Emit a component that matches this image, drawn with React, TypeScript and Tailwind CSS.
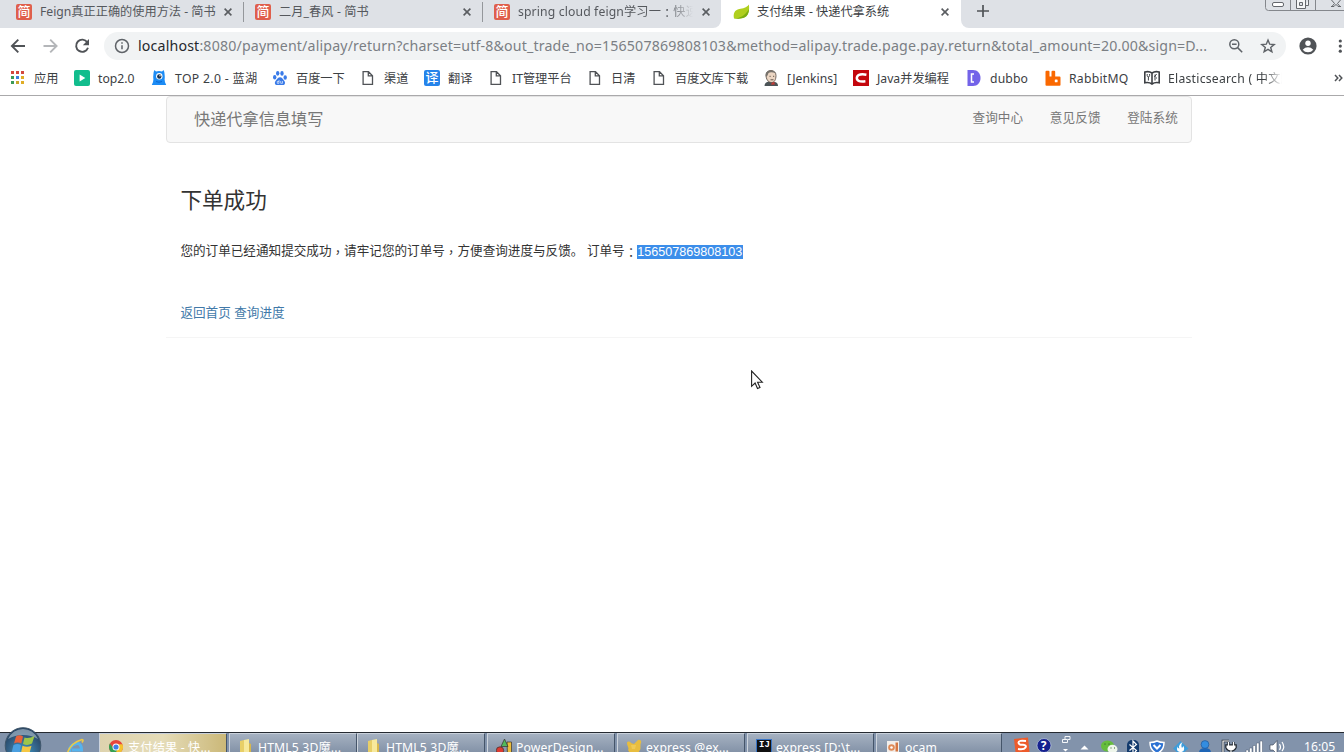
import type { ReactNode } from 'react';

function JianIcon() {
  return (
    <span className="flex h-4 w-4 shrink-0 items-center justify-center rounded-[2px] bg-[#df5f4c] text-[13px] leading-none font-medium text-white">
      <span className="-mt-px">简</span>
    </span>
  );
}

function CloseIcon() {
  return (
    <svg width="8" height="8" viewBox="0 0 8 8" className="-mt-px shrink-0" stroke="#5a5d61" strokeWidth="1.6">
      <path d="M0.6 0.6 7.4 7.4M7.4 0.6 0.6 7.4" />
    </svg>
  );
}

function PageIcon() {
  return (
    <svg width="16" height="16" viewBox="0 0 16 16" fill="none" stroke="#505357" strokeWidth="1.3">
      <path d="M3.1 1.7h5.400l4 4v8.600H3.1zM8.300 1.900v4h4" />
    </svg>
  );
}

function LeafIcon() {
  return (
    <svg width="17" height="16" viewBox="0 0 17 16" className="shrink-0">
      <path d="M15.8.6c.9 5 .1 9.600-3.500 12.200-3.300 2.300-8 2-11.300 1.600C0 9.800 1.600 5.900 6.300 5.100 10 4.500 13.500 4 15.800.6z" fill="#b0cf1e" />
      <path d="M1 14.300c4.500.2 10.500-1.500 15-9.300 0 4-1.500 7.300-4.500 8.600-3.300 1.400-7 1.200-10.500.7z" fill="#7cae12" />
    </svg>
  );
}

// full-width punctuation centred in its em box
function Mark({ children }: { children: string }) {
  return <span className="relative top-[2px] font-['Noto_Sans_CJK_TC',sans-serif] leading-none">{children}</span>;
}

const appColors = ['#d3483f', '#d3483f', '#d3483f', '#3a9a57', '#3c80e0', '#e0ad25', '#3a9a57', '#c8a72c', '#e0ad25'];

const bookmarks: { label: string; width: string; icon: ReactNode }[] = [
  {
    label: '应用',
    width: 'w-[24px]',
    icon: (
      <svg width="16" height="16" viewBox="0 0 16 16">
        {appColors.map((c, i) => (
          <rect key={i} x={1 + (i % 3) * 5} y={1 + Math.floor(i / 3) * 5} width="3" height="3" fill={c} />
        ))}
      </svg>
    ),
  },
  {
    label: 'top2.0',
    width: 'w-[37px]',
    icon: (
      <svg width="16" height="16" viewBox="0 0 16 16">
        <rect width="16" height="16" rx="2" fill="#12bd8d" />
        <path d="M5.600 4.600 11.300 8l-5.700 3.400z" fill="#fff" />
      </svg>
    ),
  },
  {
    label: 'TOP 2.0 - 蓝湖',
    width: 'w-[81px] tracking-[0.35px]',
    icon: (
      <svg width="16" height="16" viewBox="0 0 16 16">
        <path d="M3.500 0 5 1.500Q8 .3 11 1.500L12.500 0q1.200 2 1.100 4.500.4 2.500 0 5-.1 2 1.600 5.500H.8q1.700-3.500 1.600-5.500-.4-2.500 0-5Q2.300 2 3.500 0z" fill="#1c8cf5" />
        <circle cx="8.300" cy="6.200" r="3.200" fill="#fff" />
        <circle cx="8.300" cy="6.500" r="2.200" fill="#16304f" />
        <circle cx="9" cy="5.700" r=".7" fill="#fff" />
        <path d="M5 11.500q3 1.500 6 0" stroke="#0b66cf" fill="none" />
      </svg>
    ),
  },
  {
    label: '百度一下',
    width: 'w-[48px]',
    icon: (
      <svg width="16" height="16" viewBox="0 0 16 16" fill="#3a7be8">
        <ellipse cx="5.700" cy="3.300" rx="1.700" ry="2.400" />
        <ellipse cx="10" cy="3.400" rx="1.700" ry="2.300" />
        <ellipse cx="2.700" cy="7.300" rx="1.700" ry="2.200" />
        <ellipse cx="13.200" cy="7.500" rx="1.700" ry="2.200" />
        <path d="M8 7.300c2 0 2.600 1.800 4 3.100 1.700 1.600 1.300 4.600-1.200 4.700-1 0-1.800-.2-2.800-.2s-1.800.2-2.800.2c-2.600-.1-3-3.100-1.300-4.700C5.400 9.100 6 7.300 8 7.300z" />
        <path d="M7 10v3.300H5.300v-1.800H7M8.700 11v2.300h1.800V11" stroke="#fff" strokeWidth=".6" fill="none" />
      </svg>
    ),
  },
  { label: '渠道', width: 'w-[24px]', icon: <PageIcon /> },
  {
    label: '翻译',
    width: 'w-[24px]',
    icon: (
      <span className="flex h-4 w-4 items-center justify-center rounded-[2px] bg-[#2583ea] text-[13px] leading-none font-medium text-white">
        <span className="-mt-[2px]">译</span>
      </span>
    ),
  },
  { label: 'IT管理平台', width: 'w-[59px]', icon: <PageIcon /> },
  { label: '日清', width: 'w-[24px]', icon: <PageIcon /> },
  { label: '百度文库下载', width: 'w-[72px]', icon: <PageIcon /> },
  {
    label: '[Jenkins]',
    width: 'w-[50px] tracking-[0.05px]',
    icon: (
      <svg width="16" height="16" viewBox="0 0 16 16">
        <path d="M1.500 16c0-2.500 1.500-4 4.500-4.500l5 .3c2.600.5 4 1.700 4 4.200z" fill="#4b5457" />
        <path d="M3 5c0-3 2.200-4.500 5-4.500S13 2.300 13 5.500c0 4-1.600 7-4.300 7C5 12.500 3 9 3 5z" fill="#ecd6c3" stroke="#54483f" strokeWidth=".8" />
        <path d="M3 7C2 2.600 4.500.3 8 .5c2.200.1 4 1 4.800 3C10 2 7 1.800 5.500 3 4.800 4 5 6 3 7z" fill="#77736d" />
        <path d="M6.500 6.300h1.200M10 6.300h1.200M7.500 9.800h3" stroke="#54483f" strokeWidth=".9" />
        <path d="m8.500 13 3-1.300v3.600l-1.300-1-1.700 1z" fill="#c93a35" />
      </svg>
    ),
  },
  {
    label: 'Java并发编程',
    width: 'w-[73px]',
    icon: (
      <svg width="16" height="16" viewBox="0 0 16 16">
        <rect width="16" height="16" fill="#c4060d" />
        <path d="M13.400 4.700Q5 3.300 3.900 7.300 3 12.300 12.400 11.200" stroke="#fff" strokeWidth="2.500" fill="none" />
      </svg>
    ),
  },
  {
    label: 'dubbo',
    width: 'w-[39px] tracking-[0.150px]',
    icon: (
      <svg width="16" height="16" viewBox="0 0 16 16">
        <path d="M1.500 0H7c4.500 0 7.500 3.300 7.500 8s-3 8-7.500 8H1.500z" fill="#7363e8" />
        <path d="M8 4H5.500v8H8" stroke="#fff" strokeWidth="1.500" fill="none" />
      </svg>
    ),
  },
  {
    label: 'RabbitMQ',
    width: 'w-[59px] tracking-[0.25px]',
    icon: (
      <svg width="16" height="16" viewBox="0 0 16 16">
        <path d="M.500 1.800Q.500.800 1.500.800h2q1 0 1 1v4.700h2V1.800q0-1 1-1h1.700q1 0 1 1v4.700h4.300q1 0 1 1V15q0 .8-1 .8h-13q-1 0-1-.8z" fill="#fa6800" />
        <rect x="9.800" y="9.500" width="2.800" height="2.800" rx=".6" fill="#fff" />
      </svg>
    ),
  },
  {
    label: 'Elasticsearch ( 中文版 )',
    width: 'w-[114px] tracking-[0.25px] [mask-image:linear-gradient(to_right,black_96px,transparent)]',
    icon: (
      <svg width="16" height="16" viewBox="0 0 16 16" fill="none" stroke="#3d4044" strokeWidth="1.600">
        <path d="M.800 2Q5 .800 8 3q3-2.200 7.200-1v10.800Q11 11.800 8 14q-3-2.200-7.200-1.200zM8 3v10.500" />
        <path d="M3.200 4v1.500q0 1.300 1.200 1.300T5.600 5.500V4M4.400 7v3.500M10.400 7l2.200-3M11 10.500V4.500M12.500 7.500v1" strokeWidth="1" />
      </svg>
    ),
  },
];

function TabStrip() {
  return (
    <div className="flex h-7 shrink-0 bg-white text-[12.200px] text-[#55585d]">
      <div className="flex h-7 w-[721px] rounded-br-[8px] bg-[#dee1e6]">
        <div className="flex h-6 w-[243px] items-center pl-4">
          <JianIcon />
          <span className="ml-2 w-[184px] whitespace-nowrap">Feign真正正确的使用方法 - 简书</span>
          <CloseIcon />
        </div>
        <div className="flex h-6 w-[239px] items-center">
          <div className="h-5 w-px bg-[#94979b]" />
          <span className="ml-[11px] flex"><JianIcon /></span>
          <span className="ml-2 w-[184px] tracking-[0.100px] whitespace-nowrap">二月_春风 - 简书</span>
          <CloseIcon />
        </div>
        <div className="flex h-6 w-[239px] items-center">
          <div className="h-5 w-px bg-[#94979b]" />
          <span className="ml-[11px] flex"><JianIcon /></span>
          <span className="mr-[9px] ml-2 w-[175px] overflow-hidden [mask-image:linear-gradient(to_right,black_150px,transparent)] tracking-[0.140px] whitespace-nowrap">
            spring cloud feign学习一<Mark>：</Mark>快速
          </span>
          <CloseIcon />
        </div>
      </div>
      <div className="flex h-6 w-[240px] items-center pl-3 text-[#3c4043]">
        <LeafIcon />
        <span className="ml-[7px] w-[184px] whitespace-nowrap">支付结果 - 快递代拿系统</span>
        <CloseIcon />
      </div>
      <div className="flex flex-1 justify-between rounded-bl-[8px] bg-[#dee1e6]">
        <svg width="12" height="12" viewBox="0 0 12 12" className="mt-[5px] ml-4" stroke="#505357" strokeWidth="1.700">
          <path d="M6 0v12M0 6h12" />
        </svg>
        <svg width="80" height="12" viewBox="0 0 80 12" fill="none" stroke="#84878c">
          <path d="M1.500 0v7.500q0 3 3 3H80M26.500 0v10M51.500 0v10" />
          <rect x="8.500" y="2.500" width="11" height="4" rx="1.500" fill="#fff" stroke="#65686d" />
          <path d="M41.500 5.500h3V0M32.500 0v8.500h9V0M35.500 2.500h3v3h-3z" fill="#f5f6f7" stroke="#65686d" />
          <path d="m67.500 7 3-3.500L67.500 0M76.500 7l-3-3.500 3-3.500M67 6.500h3l2-2.200 2 2.200h3" stroke="#65686d" />
        </svg>
      </div>
    </div>
  );
}

function Toolbar() {
  return (
    <div className="flex h-9 shrink-0 items-center">
      <svg width="104" height="36" viewBox="0 0 104 36" fill="none" strokeWidth="1.900" className="shrink-0">
        <path d="M25 18H12M18.300 11.600 11.900 18l6.400 6.400" stroke="#505357" />
        <path d="M43.500 18h13M50.200 11.600l6.400 6.400-6.400 6.400" stroke="#b4b6b9" />
        <path d="M87.300 14.300A6.100 6.100 0 1 0 88 19.800" stroke="#505357" />
        <path d="M89 11v6.200h-6.200z" fill="#505357" />
      </svg>
      <div className="flex h-7 w-[1182px] shrink-0 items-center rounded-full bg-[#f1f3f4] pl-[10px]">
        <svg width="16" height="16" viewBox="0 0 16 16" fill="none" stroke="#5f6368" strokeWidth="1.500" className="shrink-0">
          <circle cx="8" cy="8" r="6.500" />
          <path d="M8 7.200v4M8 4.300v1.500" />
        </svg>
        <span className="ml-2 w-[1090px] text-[14.200px] tracking-[0.160px] whitespace-nowrap text-[#7b7f84]">
          <span className="text-[#25282c]">localhost</span>
          :8080/payment/alipay/return?charset=utf-8&amp;out_trade_no=156507869808103&amp;method=alipay.trade.page.pay.return&amp;total_amount=20.00&amp;sign=D...
        </span>
        <svg width="16" height="16" viewBox="0 0 16 16" fill="none" stroke="#5f6368" strokeWidth="1.500" className="shrink-0">
          <circle cx="6.300" cy="6.300" r="4.500" />
          <path d="m9.600 9.600 4.600 4.600M4 6.300h4.600" />
        </svg>
        <svg width="16" height="16" viewBox="0 0 16 16" fill="none" stroke="#5f6368" strokeWidth="1.400" className="ml-4 shrink-0">
          <path d="m8 2 1.700 4.200 4.500.3-3.500 2.900 1.200 4.400L8 11.300l-3.900 2.500 1.200-4.400-3.500-2.900 4.500-.3z" />
        </svg>
      </div>
      <svg width="18" height="18" viewBox="0 0 18 18" className="ml-[13px] shrink-0">
        <circle cx="9" cy="9" r="8.600" fill="#505357" />
        <circle cx="9" cy="6.200" r="2.700" fill="#fff" />
        <path d="M3.700 12.700Q6 10.300 9 10.300t5.300 2.400Q12.300 15.300 9 15.300t-5.300-2.600z" fill="#fff" />
      </svg>
      <svg width="6" height="16" viewBox="0 0 6 16" fill="#505357" className="ml-[20px] shrink-0">
        <circle cx="3.300" cy="3" r="1.600" />
        <circle cx="3.300" cy="8.100" r="1.600" />
        <circle cx="3.300" cy="13.200" r="1.600" />
      </svg>
    </div>
  );
}

function BookmarkBar() {
  return (
    <div className="flex h-8 shrink-0 items-start justify-between border-b border-[#aaa9ab] pt-[6px]">
      <div className="flex gap-4 pl-[10px]">
        {bookmarks.map((b, i) => (
          <div key={i} className="flex h-4 items-center gap-2">
            <span className="flex h-4 w-4 shrink-0">{b.icon}</span>
            <span className={`${b.width} mt-[2px] shrink-0 text-[12.200px] leading-[18px] whitespace-nowrap text-[#3c4043]`}>
              {b.label}
            </span>
          </div>
        ))}
      </div>
      <svg width="11" height="16" viewBox="0 0 11 16" fill="none" stroke="#505357" strokeWidth="1.500">
        <path d="m2 5 2.800 3L2 11M6 5l2.800 3L6 11" />
      </svg>
    </div>
  );
}

function PageContent() {
  return (
    <main className="ml-[166px] w-[1026px] flex-1 font-['Liberation_Sans','Noto_Sans_CJK_SC',sans-serif] text-[12.600px] text-[#333]">
      <nav className="flex h-[47px] items-center justify-between rounded-[4px] border border-[#e3e3e3] bg-[#f8f8f8] pr-[13px] pl-[27px] text-[#777]">
        <a className="text-[16.200px]">快递代拿信息填写</a>
        <div className="flex gap-[26.500px] pb-[2px] tracking-[0.120px]">
          <a>查询中心</a>
          <a>意见反馈</a>
          <a>登陆系统</a>
        </div>
      </nav>
      <section className="h-[195px] border-b border-[#f5f5f5] pt-[43px] pl-[14.400px]">
        <h3 className="text-[21.600px] leading-[30px]">下单成功</h3>
        <p className="mt-[26px] leading-[18px] whitespace-nowrap">
          您的订单已经通知提交成功<Mark>，</Mark>请牢记您的订单号<Mark>，</Mark>方便查询进度与反馈。 订单号<Mark>：</Mark>
          <span className="inline-block h-[14px] w-[106px] bg-[#3c8eea] align-middle leading-[14px] text-white">156507869808103</span>
        </p>
        <p className="mt-[44px] leading-[18px] text-[#4179a9]">
          <a>返回首页</a> <a>查询进度</a>
        </p>
      </section>
      <svg width="14" height="20" viewBox="0 0 14 20" className="mt-[32px] ml-[585px]">
        <path d="M.6 1v15.300l3.500-3.300 2.400 5.500 2.500-1.100-2.400-5.200h4.700z" fill="#fff" stroke="#222" strokeWidth="1.100" />
      </svg>
    </main>
  );
}

function FolderIcon() {
  return (
    <svg width="16" height="16" viewBox="0 0 16 16">
      <path d="M2 2 6 1v15H2z" fill="#e8cf67" />
      <path d="m6 1 5-1v16H6z" fill="#f7e99c" />
      <path d="m11 4 2 1v11h-2z" fill="#d8b84c" />
    </svg>
  );
}

const tasks: { label: string; width: string; icon: ReactNode }[] = [
  {
    label: '支付结果 - 快...',
    width: 'w-[128px] mr-[2px] bg-linear-to-r from-[#ded3ae] via-[#e5dcb8] to-[#cbb878]',
    icon: (
      <svg width="16" height="16" viewBox="0 0 16 16">
        <circle cx="8" cy="8" r="7" fill="#e7463a" />
        <path d="M1.900 4.600A7 7 0 0 0 7 15l3.300-5.500L5.300 9z" fill="#35a153" />
        <path d="M14.400 5.200A7 7 0 0 1 7 15l4-7-3-2.800z" fill="#f4c32f" />
        <circle cx="8" cy="8" r="3.500" fill="#fff" />
        <circle cx="8" cy="8" r="2.600" fill="#3f7fe5" />
      </svg>
    ),
  },
  { label: 'HTML5 3D魔...', width: 'w-[128px] bg-linear-to-b from-[#a5b1c1] to-[#8291a6]', icon: <FolderIcon /> },
  { label: 'HTML5 3D魔...', width: 'w-[128px] mr-[2px] bg-linear-to-b from-[#a5b1c1] to-[#8291a6]', icon: <FolderIcon /> },
  {
    label: 'PowerDesign...',
    width: 'w-[128px] mr-[2px] bg-linear-to-b from-[#a5b1c1] to-[#8291a6]',
    icon: (
      <svg width="16" height="16" viewBox="0 0 16 16" stroke="#38302d" strokeWidth=".7">
        <path d="M11 3h4.500v13h-4z" fill="#ecbe3c" />
        <path d="m8.500 0 3.500 7.500H5z" fill="#51b95b" />
        <circle cx="4" cy="11.500" r="3.700" fill="#df3a31" />
      </svg>
    ),
  },
  {
    label: 'express @ex...',
    width: 'w-[128px] mr-[2px] bg-linear-to-b from-[#a5b1c1] to-[#8291a6]',
    icon: (
      <svg width="16" height="16" viewBox="0 0 16 16">
        <path d="M1 4c0-2 3-2 4 0l3 1L12 1c3-1 4 2 2.500 4v5L11 16H5L2 11C3.500 9 1 7 1 4z" fill="#e8bd3e" />
        <path d="M5 6h5l-1 4H6z" fill="#efca55" />
      </svg>
    ),
  },
  {
    label: 'express [D:\\t...',
    width: 'w-[127px] mr-[2px] bg-linear-to-b from-[#a5b1c1] to-[#8291a6]',
    icon: (
      <span className="h-4 w-4 border border-[#3773c5] bg-[#101010] pl-[2px] font-['Liberation_Mono',monospace] text-[9px] leading-[10px] font-bold text-white">
        IJ
      </span>
    ),
  },
  {
    label: 'ocam',
    width: 'w-[126px] bg-linear-to-b from-[#a5b1c1] to-[#8291a6]',
    icon: (
      <svg width="16" height="16" viewBox="0 0 16 16">
        <path d="M2 2h12v14H2z" fill="#f2eeea" />
        <circle cx="6.500" cy="8.500" r="3.300" fill="#e08a56" />
        <circle cx="6.500" cy="8.500" r="1.300" fill="#fff" />
        <path d="M10.500 3.500h2.500v9h-2.500z" fill="#d57642" />
      </svg>
    ),
  },
];

function Taskbar() {
  return (
    <footer className="flex h-5 shrink-0 border-t border-[#252a31] bg-[#8293ab] font-['Noto_Sans','Noto_Sans_CJK_SC',sans-serif] text-[12.200px] text-white">
      <svg width="98" height="26" viewBox="0 0 98 26" className="-mt-[6px] mr-px shrink-0">
        <defs>
          <radialGradient id="orb" cx="50%" cy="70%" r="65%">
            <stop offset="0" stopColor="#3aa0d0" />
            <stop offset=".6" stopColor="#35658b" />
            <stop offset="1" stopColor="#274463" />
          </radialGradient>
        </defs>
        <circle cx="23" cy="18.500" r="17.800" fill="url(#orb)" stroke="#40576b" />
        <path d="M8 12Q13 2 23 2t15 10q-7-4-15-4T8 12z" fill="#c3d3df" opacity=".55" />
        <path d="M16 9.500q3.500-2.500 7 0L21.300 16.500q-3.800-2-7.300 0z" fill="#e8613a" />
        <path d="M24.500 10.500q4.500 1.500 10-1.500L32 16.500q-4.500 2.500-9 .5z" fill="#9dc64a" />
        <path d="M13.500 18q3.800-2 7.500 0L19.500 26H11.500z" fill="#4a9fe0" />
        <path d="M22.500 18.700q4.500 2 9 0L29.500 26H21z" fill="#f5c743" />
        <path d="M70 26q-1.500-7 5-9t6.500 6H72" stroke="#55b4ee" strokeWidth="3" fill="none" />
        <path d="M67.500 26q3-10 14.500-13.500 2 0 0 3" stroke="#ebc948" strokeWidth="1.700" fill="none" />
      </svg>
      {tasks.map((t, i) => (
        <div key={i} className={`${t.width} h-5 shrink-0 border border-b-0 border-t-[#c8d0da] border-l-[#cdd4dd] border-r-[#45556a] pt-[5px] pl-2`}>
          <div className="flex gap-1">
            <span className="flex w-4 shrink-0">{t.icon}</span>
            <span className="tracking-[0.150px] whitespace-nowrap">{t.label}</span>
          </div>
        </div>
      ))}
      <svg width="290" height="19" viewBox="0 0 290 19" className="ml-3 shrink-0">
        <path d="m0 6 14-1.500L15.500 19H1.500z" fill="#ed5b2b" />
        <path d="M12 8Q4.500 7 4.500 9.500t4.500 2.200q4 .3 2.500 2.800T4 16" stroke="#fff" strokeWidth="2" fill="none" />
        <circle cx="30" cy="12.500" r="7" fill="#15218f" stroke="#bfcce0" strokeWidth=".7" />
        <text x="26.800" y="16.700" fontSize="12" fontWeight="700" fill="#fff">?</text>
        <path d="M48.500 6.500h5v3h-5zM51 6V3.500h5v3h-2" fill="none" stroke="#f4f6f9" />
        <path d="M49 16h5l-2.500 2.500zM66.500 16.500l4-4 4 4z" fill="#fff" />
        <ellipse cx="93.500" cy="13" rx="6.500" ry="5.500" fill="#66bd3d" />
        <ellipse cx="98.500" cy="16" rx="5" ry="4.300" fill="#eff6eb" />
        <path d="M91 10.500v1.200M95 10.500v1.200M97 14.500v1M100.500 14.500v1" stroke="#2d6226" />
        <rect x="113" y="7" width="12" height="18" rx="5" fill="#123a6d" />
        <path d="m115.500 11.500 7 6L119 21V8l3.500 3.500-7 6" stroke="#fff" strokeWidth="1.200" fill="none" />
        <path d="M136 9.500q4 0 7-1.500 3 1.500 7 1.500 0 8-7 11-7-3-7-11z" fill="#2c72d3" stroke="#fff" strokeWidth="1.500" />
        <path d="m139.500 12 3.500 3.500 3.500-3.500" stroke="#fff" strokeWidth="2" fill="none" />
        <path d="m159 15.500 7.500-7.500 8 7.500-8 7z" fill="#3d9cda" />
        <path d="M168.500 9q-5 3-3 6.500-2 0-2-2-2 6 4 5.500 4-1 2-6l-1.500 2q-1.500-3 .5-6z" fill="#fff" />
        <circle cx="191" cy="11.500" r="3.900" fill="#338de1" stroke="#235798" strokeWidth=".7" />
        <path d="M185 20q0-5 6-5t6 5z" fill="#1e65b6" />
        <path d="M215 8h-6v11M214.500 9v4M219.500 9v4M212.500 12.500h9v2q-1.500 3-4.500 3t-4.500-3zM217 17.500v2" stroke="#242b33" strokeWidth="2.600" fill="none" />
        <path d="M215 8h-6v11M214.500 9v4M219.500 9v4M217 17.500v2" stroke="#fff" strokeWidth="1.200" fill="none" />
        <path d="M212.500 12.500h9v2q-1.500 3-4.500 3t-4.500-3z" fill="#fff" />
        <path d="M232 17h2.500v3H232zM235.500 15h2.500v5h-2.500zM239 12.500h2.500V20H239zM242.500 10h2.500v10h-2.500zM246 8h2.500v12H246z" fill="#fff" stroke="#4a5a70" strokeWidth=".5" />
        <path d="M256 12h3l4-4.500V21l-4-4h-3z" fill="#fff" stroke="#303b4b" strokeWidth=".6" />
        <path d="M265.500 11q2 3 0 6M268 9q3.500 5 0 9" stroke="#fff" strokeWidth="1.200" fill="none" />
      </svg>
      <span className="mt-[5px] whitespace-nowrap">16:05</span>
    </footer>
  );
}

export default function App() {
  return (
    <div className="flex h-[752px] w-[1344px] flex-col overflow-hidden bg-white font-['Noto_Sans','Noto_Sans_CJK_SC',sans-serif]">
      <TabStrip />
      <Toolbar />
      <BookmarkBar />
      <PageContent />
      <Taskbar />
    </div>
  );
}
